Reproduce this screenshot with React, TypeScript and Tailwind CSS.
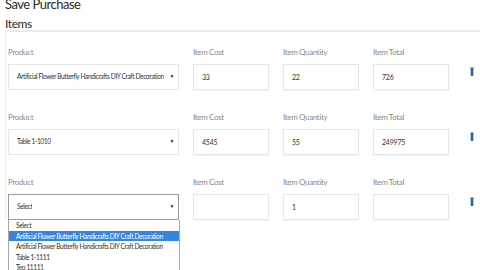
import { useState } from "react";

type Row = { product: string; cost: string; qty: string; total: string };

const rows: Row[] = [
  { product: "Artificial Flower Butterfly Handicrafts DIY Craft Decoration", cost: "33", qty: "22", total: "726" },
  { product: "Table 1-1010", cost: "4545", qty: "55", total: "249975" },
  { product: "Select", cost: "", qty: "1", total: "" },
];

const options = [
  "Select",
  "Artificial Flower Butterfly Handicrafts DIY Craft Decoration",
  "Artificial Flower Butterfly Handicrafts DIY Craft Decoration",
  "Table 1-1111",
  "Teo 11111",
];

const Trash = () => (
  <svg width="4" height="9" viewBox="0 0 4 9">
    <path d="M0.3 0.4h3.4v1.2H3.3V8.4q0 0.6-0.6 0.6H1.3q-0.6 0-0.6-0.6V1.6H0.3z" fill="#1f66b0" />
  </svg>
);

const Field = ({ label, value }: { label: string; value: string }) => (
  <div className="flex flex-col gap-[7px] w-[76px]">
    <span className="text-[8px] leading-[10px] tracking-[-0.35px] text-[#8a8a8a]">{label}</span>
    <div className="h-[26px] border border-[#e6e6e6] shadow-[0_1px_1px_rgba(0,0,0,0.04)] flex items-center px-2 text-[7px] tracking-[-0.2px] text-[#333]">
      {value}
    </div>
  </div>
);

export default function App() {
  const [open] = useState(true);
  return (
    <div className="w-[480px] h-[270px] overflow-hidden bg-white font-['Lato',sans-serif] text-[#222]">
      <h1 className="px-[5px] -mt-[4px] text-[13px] leading-[16px] tracking-[-0.5px] text-[#2a2a2a]">Save Purchase</h1>
      <h2 className="px-[5px] mt-[5px] text-[12px] leading-[14px] tracking-[-0.4px] text-[#2a2a2a]">Items</h2>
      <div className="ml-[5px] -mt-[1px] border-t-[2px] border-l border-[#ececec] pl-[2px] pt-[15px] flex flex-col gap-[22px]">
        {rows.map((r, i) => (
          <div key={i} className="relative flex items-start gap-[14px]">
            <div className="flex flex-col gap-[7px] w-[171px]">
              <span className="text-[8px] leading-[10px] tracking-[-0.35px] text-[#8a8a8a]">Product</span>
              <div
                className={`h-[26px] border flex items-center justify-between pl-[8px] pr-[4px] text-[6.6px] tracking-[-0.4px] whitespace-nowrap text-[#333] ${
                  i === 2 ? "border-[#9a9a9a]" : "border-[#e6e6e6]"
                }`}
              >
                <span className="overflow-hidden">{r.product}</span>
                <span className="text-[5px] text-[#222]">▼</span>
              </div>
              {i === 2 && open && (
                <div className="absolute left-0 top-[43px] w-[172px] bg-white border border-[#a8a8a8] border-t-0 z-10">
                  {options.map((o, j) => (
                    <div
                      key={j}
                      className={`h-[10.5px] leading-[10.5px] pl-[7px] text-[6.6px] tracking-[-0.4px] whitespace-nowrap ${
                        j === 1 ? "bg-[#3584dd] text-white" : "text-[#333]"
                      }`}
                    >
                      {o}
                    </div>
                  ))}
                </div>
              )}
            </div>
            <Field label="Item Cost" value={r.cost} />
            <Field label="Item Quantity" value={r.qty} />
            <Field label="Item Total" value={r.total} />
            <div className="ml-[7px] pt-[20px]">
              <Trash />
            </div>
          </div>
        ))}
      </div>
    </div>
  );
}
